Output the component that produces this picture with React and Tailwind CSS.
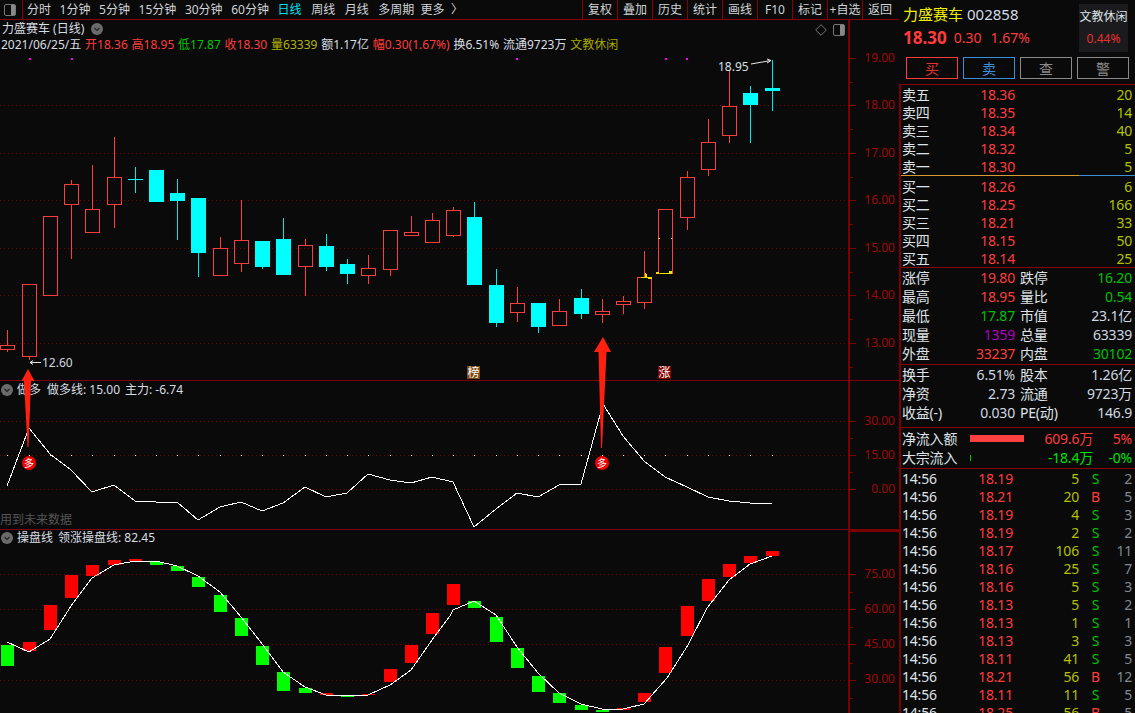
const RED = "#ff3c3c";
const GRID = "#7a0000";
const LINE = "#7d0000";

const TABS_A = ["分时", "1分钟", "5分钟", "15分钟", "30分钟", "60分钟"];
const TABS_B = ["周线", "月线", "多周期"];
const TOOLS = ["复权", "叠加", "历史", "统计", "画线", "F10", "标记", "+自选", "返回"];

// [center x, high, low, body top, body bottom, up?]
const CANDLES = [
  [7, 330, 352, 345, 349, 1],
  [29, 284, 360, 284, 356, 1],
  [50, 216, 295, 216, 295, 1],
  [71, 180, 259, 184, 204, 1],
  [92, 165, 233, 209, 232, 1],
  [114, 137, 228, 177, 204, 1],
  [135, 167, 193, 179, 180, 0],
  [156, 170, 202, 170, 202, 0],
  [177, 179, 240, 193, 201, 0],
  [198, 198, 277, 198, 253, 0],
  [220, 237, 275, 248, 275, 1],
  [241, 200, 272, 240, 263, 1],
  [262, 241, 269, 241, 267, 0],
  [283, 218, 275, 239, 275, 0],
  [305, 239, 296, 245, 266, 1],
  [326, 234, 271, 246, 267, 0],
  [347, 259, 284, 264, 274, 0],
  [368, 255, 284, 268, 275, 1],
  [390, 230, 276, 230, 269, 1],
  [411, 216, 235, 232, 235, 1],
  [432, 213, 243, 220, 242, 1],
  [453, 207, 237, 210, 235, 1],
  [474, 202, 285, 217, 285, 0],
  [496, 269, 327, 285, 323, 0],
  [517, 287, 322, 303, 312, 1],
  [538, 303, 333, 303, 327, 0],
  [559, 299, 326, 311, 325, 1],
  [581, 289, 319, 298, 314, 0],
  [602, 299, 323, 311, 314, 1],
  [623, 296, 314, 301, 304, 1],
  [644, 251, 309, 277, 302, 1],
  [665, 209, 273, 209, 273, 1],
  [687, 171, 230, 177, 217, 1],
  [708, 119, 176, 142, 169, 1],
  [729, 70, 143, 106, 135, 1],
  [750, 86, 143, 93, 105, 0],
  [772, 60, 111, 88, 91, 0],
];

const MAIN_GRID = [105, 153, 200, 248, 295, 343];
const MAIN_TICKS = [
  ["19.00", 58], ["18.00", 105], ["17.00", 153], ["16.00", 200],
  ["15.00", 248], ["14.00", 295], ["13.00", 343],
];
const MAIN_MINOR = [82, 129, 177, 224, 272, 319, 367];

const DUO_LINE = "7,486 29,428 50,454 71,470 92,492 114,485 135,501 156,502 177,502 198,520 220,507 241,502 262,511 283,503 305,487 326,497 347,493 368,474 390,480 411,483 432,477 453,482 474,527 496,509 517,493 538,497 559,485 581,484 603,404 623,436 644,461 665,477 687,487 708,497 729,501 750,503 772,504";

const PAN_LINE = "7,642 29,652 50,639 71,606 92,578 114,565 135,561 156,561 177,566 198,576 220,592 241,617 263,645 283,672 305,687 326,695 347,695 368,695 390,685 411,670 432,640 450,616 453,610 474,601 496,615 517,647 538,673 559,693 581,704 602,709 623,709 644,704 667,678 688,645 707,608 729,580 750,564 772,556";

// [center x, top, bottom, up?]
const PAN_BARS = [
  [7, 645, 666, 0], [29, 642, 651, 1], [50, 605, 630, 1], [71, 575, 598, 1],
  [92, 565, 576, 1], [114, 560, 565, 1], [135, 559, 561, 1], [156, 562, 565, 0],
  [177, 566, 571, 0], [198, 577, 587, 0], [220, 595, 612, 0], [241, 618, 636, 0],
  [262, 646, 665, 0], [283, 672, 691, 0], [305, 688, 693, 0], [326, 693, 695, 1],
  [347, 695, 697, 0], [368, 694, 695, 1], [390, 669, 682, 1], [411, 645, 663, 1],
  [432, 613, 634, 1], [453, 584, 605, 1], [474, 601, 608, 0], [496, 617, 642, 0],
  [517, 648, 668, 0], [538, 676, 692, 0], [559, 693, 703, 0], [581, 705, 710, 0],
  [602, 710, 712, 0], [623, 708, 710, 1], [644, 693, 702, 1], [665, 647, 673, 1],
  [687, 606, 636, 1], [708, 579, 601, 1], [729, 564, 577, 1], [750, 556, 563, 1],
  [772, 551, 556, 1],
];

const SELLS = [["卖五", "18.36", "20"], ["卖四", "18.35", "14"], ["卖三", "18.34", "40"], ["卖二", "18.32", "5"], ["卖一", "18.30", "5"]];
const BUYS = [["买一", "18.26", "6"], ["买二", "18.25", "166"], ["买三", "18.21", "33"], ["买四", "18.15", "50"], ["买五", "18.14", "25"]];

const TRADES = [
  ["18.19", "5", "S", "2"], ["18.21", "20", "B", "5"], ["18.19", "4", "S", "3"], ["18.19", "2", "S", "2"],
  ["18.17", "106", "S", "11"], ["18.16", "25", "S", "7"], ["18.16", "5", "S", "3"], ["18.13", "5", "S", "2"],
  ["18.13", "1", "S", "1"], ["18.13", "3", "S", "3"], ["18.11", "41", "S", "5"], ["18.21", "56", "B", "12"],
  ["18.11", "11", "S", "5"], ["18.25", "56", "B", "5"],
];

function DownDot() {
  return (
    <svg width="12" height="12" viewBox="0 0 12 12" className="shrink-0">
      <circle cx="6" cy="6" r="6" fill="#6a6a6a" />
      <path d="M3.5 5 L6 7.5 L8.5 5" fill="none" stroke="#222" strokeWidth="1.2" />
    </svg>
  );
}

function PanelIcon({ className }) {
  return (
    <svg width="12" height="12" viewBox="0 0 12 12" className={className}>
      <rect x="0.5" y="0.5" width="11" height="11" rx="1.5" fill="#0a0a0a" stroke="#777" />
      <rect x="7" y="1" width="4" height="10" fill="#888" />
    </svg>
  );
}

function Candle({ c }) {
  const [x, hi, lo, top, bot, up] = c;
  if (up) {
    return (
      <g stroke={RED} fill="none">
        {hi < top && <line x1={x + 0.5} x2={x + 0.5} y1={hi} y2={top} />}
        {lo > bot && <line x1={x + 0.5} x2={x + 0.5} y1={bot} y2={lo} />}
        <rect x={x - 6.5} y={top + 0.5} width="14" height={bot - top} />
      </g>
    );
  }
  return (
    <g>
      <line x1={x + 0.5} x2={x + 0.5} y1={hi} y2={lo} stroke="#00e8e8" />
      <rect x={x - 7} y={top} width="15" height={bot - top} fill="#00ffff" />
    </g>
  );
}

function GridLines({ ys }) {
  return ys.map((y) => (
    <line key={y} x1="0" x2="848" y1={y + 0.5} y2={y + 0.5} stroke={GRID} strokeDasharray="1 3" />
  ));
}

function Axis({ y0, h, ticks, minor }) {
  return (
    <svg width="50" height={h} viewBox={`849 ${y0} 50 ${h}`} className="block">
      {ticks.map(([label, y, ly]) => (
        <g key={label}>
          <line x1="849" x2="855" y1={y + 0.5} y2={y + 0.5} stroke={LINE} />
          <text x="894" y={(ly ?? y) + 4} textAnchor="end" fontSize="12" fill="#a00808">{label}</text>
        </g>
      ))}
      {minor.map((y) => (
        <line key={y} x1="849" x2="852" y1={y + 0.5} y2={y + 0.5} stroke={LINE} />
      ))}
    </svg>
  );
}

function MainPane() {
  return (
    <div className="flex h-[361px] shrink-0 border-b border-[#7d0000]">
      <div className="relative w-[848px] h-[360px]">
        <svg width="848" height="360" viewBox="0 20 848 360" className="block" shapeRendering="crispEdges">
          <GridLines ys={MAIN_GRID} />
          {CANDLES.map((c) => <Candle key={c[0]} c={c} />)}
          {[29, 71, 516, 665, 686].map((x) => <rect key={x} x={x} y="58" width="2" height="2" fill="#ff00ff" />)}
          <path d="M640 277h5l1-7 1 7h5v2h-4v-1h-7zM656 272h3v2h-3zM669 271h3v3h-3zM660 273h9v1h-9zM658 238h2v1h-2zM671 238h1v1h-1z" fill="#f5e400" />
          <rect x="467" y="366" width="13" height="13" fill="#7a4a10" />
          <rect x="658" y="366" width="13" height="13" fill="#800000" />
          <g shapeRendering="auto">
            <text x="473.5" y="377" textAnchor="middle" fontSize="12" fill="#fff">榜</text>
            <text x="664.5" y="377" textAnchor="middle" fontSize="12" fill="#fff">涨</text>
            <text x="42" y="367" fontSize="12" fill="#d0d8e0">12.60</text>
            <path d="M30 362.5h11M30 362.5l3-2M30 362.5l3 2" stroke="#e0e0e0" fill="none" />
            <text x="718" y="71" fontSize="12" fill="#d8e0e8">18.95</text>
            <path d="M751 64l20-3.500M771 60.500l-4-1.500M771 60.500l-4 2.500" stroke="#e8e8e8" fill="none" />
          </g>
        </svg>
        <div className="absolute left-[2px] top-[1px] flex h-[16px] items-center gap-[7px] text-[12px] text-[#d8dde2]">
          <span>力盛赛车 (日线)</span>
          <DownDot />
        </div>
        <div className="absolute left-[1px] top-[17px] flex h-[16px] items-center gap-[3.8px] whitespace-nowrap text-[12px] text-[#d8dde2]">
          <span>2021/06/25/五</span>
          <span className="text-[#ff3c3c]">开18.36</span>
          <span className="text-[#ff3c3c]">高18.95</span>
          <span className="text-[#00c800]">低17.87</span>
          <span className="text-[#ff3c3c]">收18.30</span>
          <span className="text-[#b4b400]">量63339</span>
          <span>额1.17亿</span>
          <span className="text-[#ff3c3c]">幅0.30(1.67%)</span>
          <span>换6.51%</span>
          <span>流通9723万</span>
          <span className="text-[#a8a800]">文教休闲</span>
        </div>
        <svg width="12" height="12" viewBox="0 0 12 12" className="absolute left-[815px] top-[4px]">
          <path d="M6 .7L11.300 6 6 11.300 .7 6z" fill="none" stroke="#777" />
        </svg>
        <PanelIcon className="absolute left-[833px] top-[4px]" />
      </div>
      <div className="w-[51px] border-l-2 border-[#7d0000]">
        <Axis y0={20} h={360} ticks={MAIN_TICKS} minor={MAIN_MINOR} />
      </div>
    </div>
  );
}

function DuoPane() {
  return (
    <div className="flex h-[149px] shrink-0 border-b border-[#7d0000]">
      <div className="relative w-[848px] h-[148px]">
        <svg width="848" height="148" viewBox="0 381 848 148" className="block" shapeRendering="crispEdges">
          <GridLines ys={[421, 455, 489]} />
          {CANDLES.map((c) => <rect key={c[0]} x={c[0]} y="455" width="1" height="1" fill="#fff" />)}
          <polyline points={DUO_LINE} fill="none" stroke="#ffffff" strokeWidth="1" />
          {[29, 602].map((x) => (
            <g key={x} shapeRendering="auto">
              <circle cx={x} cy="463" r="7" fill="#f00000" />
              <text x={x} y="467" textAnchor="middle" fontSize="10" fill="#fff">多</text>
            </g>
          ))}
        </svg>
        <div className="absolute left-[1px] top-[1px] flex h-[16px] items-center whitespace-nowrap text-[12px] text-[#d8dde2]">
          <DownDot />
          <span className="ml-[4px]">做多</span>
          <span className="ml-[6px]">做多线: 15.00</span>
          <span className="ml-[5px]">主力: -6.74</span>
        </div>
        <div className="absolute left-0 top-[131px] text-[12px] leading-[16px] text-[#555]">用到未来数据</div>
      </div>
      <div className="w-[51px] border-l-2 border-[#7d0000]">
        <Axis y0={381} h={148} ticks={[["30.00", 421], ["15.00", 455], ["0.00", 489]]} minor={[438, 472]} />
      </div>
    </div>
  );
}

function PanPane() {
  return (
    <div className="flex min-h-0 flex-1">
      <div className="relative h-[183px] w-[848px]">
        <svg width="848" height="183" viewBox="0 530 848 183" className="block" shapeRendering="crispEdges">
          <GridLines ys={[574, 609, 644, 680]} />
          {PAN_BARS.map(([x, top, bot, up]) => (
            <rect key={x} x={x - 6} y={top} width="13" height={bot - top} fill={up ? "#ff0000" : "#00ff00"} />
          ))}
          <polyline points={PAN_LINE} fill="none" stroke="#ffffff" strokeWidth="1" />
        </svg>
        <div className="absolute left-[1px] top-0 flex h-[16px] items-center whitespace-nowrap text-[12px] text-[#d8dde2]">
          <DownDot />
          <span className="ml-[4px]">操盘线</span>
          <span className="ml-[5px]">领涨操盘线: 82.45</span>
        </div>
      </div>
      <div className="w-[51px] border-l-2 border-t-2 border-[#7d0000]">
        <Axis
          y0={532}
          h={181}
          ticks={[["75.00", 574], ["60.00", 609], ["45.00", 644], ["30.00", 680, 679]]}
          minor={[592, 627, 663, 698]}
        />
      </div>
    </div>
  );
}

function Toolbar() {
  return (
    <div className="flex h-[20px] shrink-0 items-stretch whitespace-nowrap border-b border-[#8a0000] text-[12px] text-[#d0d4d8]">
      <div className="flex w-[23px] items-center border-r border-[#8a0000] pl-[4px]">
        <PanelIcon />
      </div>
      <div className="ml-[4px] flex items-center gap-[8.6px]">
        {TABS_A.map((t) => <span key={t}>{t}</span>)}
        <span className="text-[#00e0f0]">日线</span>
        <span className="-ml-[8.6px] flex gap-[9.6px] pl-[9.6px]">
          {TABS_B.map((t) => <span key={t}>{t}</span>)}
        </span>
        <span className="-ml-[2.6px]">更多</span>
        <span className="-ml-[2px]">〉</span>
      </div>
      <div className="ml-auto mr-[2px] flex">
        {TOOLS.map((t) => (
          <div key={t} className="flex w-[35px] items-center justify-center border-l border-[#8a0000]">{t}</div>
        ))}
      </div>
    </div>
  );
}

function Arrows() {
  return (
    <svg width="848" height="693" viewBox="0 20 848 693" className="pointer-events-none absolute left-0 top-[20px]">
      <polygon points="28,369 34.5,381 31,381 28.500,447 27.500,447 24,381 21.500,381" fill="#ff2010" />
      <polygon points="603,337 611,352 606.500,352 602,448 601,448 598.500,352 594,352" fill="#ff2010" />
    </svg>
  );
}

function BookRow({ label, price, qty }) {
  return (
    <div className="flex h-[18px] items-center">
      <span className="w-[60px] text-[#dfe3e8]">{label}</span>
      <span className="w-[53px] text-right text-[#ff3c3c]">{price}</span>
      <span className="flex-1 pr-[3px] text-right text-[#b4c000]">{qty}</span>
    </div>
  );
}

function InfoRow({ a, av, ac = "text-[#d0d8e0]", b, bv, bc = "text-[#d0d8e0]" }) {
  return (
    <div className="flex h-[19px] items-center">
      <span className="w-[50px] shrink-0 text-[#dfe3e8]">{a}</span>
      <span className={`w-[63px] text-right ${ac}`}>{av}</span>
      <span className="ml-[5px] w-[50px] shrink-0 whitespace-nowrap text-[#dfe3e8]">{b}</span>
      <span className={`flex-1 pr-[3px] text-right ${bc}`}>{bv}</span>
    </div>
  );
}

function SideButton({ label, className }) {
  return (
    <div className={`flex h-[22px] w-[52px] items-center justify-center border ${className}`}>{label}</div>
  );
}

function SidePanel() {
  return (
    <div className="flex h-[713px] w-[236px] flex-col text-[14px] tracking-[-0.2px]">
      <div className="relative h-[85px] shrink-0 border-b border-[#8a0000]">
        <div className="absolute left-[4px] top-[4px] flex items-center leading-[20px] tracking-normal">
          <span className="text-[15px] text-[#f0f000]">力盛赛车</span>
          <span className="ml-[4px] text-[15px] text-[#d0dce8]">002858</span>
        </div>
        <div className="absolute left-[4px] top-[28px] flex items-center leading-[20px] tracking-normal text-[#ff3c3c]">
          <span className="text-[17px] font-bold">18.30</span>
          <span className="ml-[7px]">0.30</span>
          <span className="ml-[9px]">1.67%</span>
        </div>
        <div className="absolute left-[180px] top-[4px] flex h-[48px] w-[49px] flex-col items-center justify-center gap-[8px] bg-[#1b1b1d] text-[12px] leading-[14px] tracking-normal">
          <span className="text-[#dfe3e8]">文教休闲</span>
          <span className="text-[#e83030]">0.44%</span>
        </div>
        <div className="absolute left-[7px] top-[57px] flex gap-[5px]">
          <SideButton label="买" className="border-[#ff3c3c] text-[#e83030]" />
          <SideButton label="卖" className="border-[#3a8fd8] text-[#3a8fd8]" />
          <SideButton label="查" className="border-[#8a8a8a] text-[#8a8a8a]" />
          <SideButton label="警" className="border-[#8a8a8a] text-[#8a8a8a]" />
        </div>
      </div>

      <div className="flex min-h-0 flex-1 flex-col overflow-hidden border-l-2 border-[#7d0000] pl-px">
        <div className="shrink-0">
          {SELLS.map(([l, p, q]) => <BookRow key={l} label={l} price={p} qty={q} />)}
        </div>
        <div className="-ml-px flex h-px shrink-0">
          <div className="w-[178px] bg-[#d89a30]" />
          <div className="flex-1 bg-[#3a8fd8]" />
        </div>
        <div className="h-[92px] shrink-0 border-b border-[#8a0000] -ml-px pl-px pt-[1px]">
          {BUYS.map(([l, p, q]) => <BookRow key={l} label={l} price={p} qty={q} />)}
        </div>
        <div className="-ml-px shrink-0 border-b border-[#8a0000] pl-px pb-px">
          <InfoRow a="涨停" av="19.80" ac="text-[#ff3c3c]" b="跌停" bv="16.20" bc="text-[#00c000]" />
          <InfoRow a="最高" av="18.95" ac="text-[#ff3c3c]" b="量比" bv="0.54" bc="text-[#00c000]" />
          <InfoRow a="最低" av="17.87" ac="text-[#00c000]" b="市值" bv="23.1亿" />
          <InfoRow a="现量" av="1359" ac="text-[#b000c0]" b="总量" bv="63339" />
          <InfoRow a="外盘" av="33237" ac="text-[#ff3c3c]" b="内盘" bv="30102" bc="text-[#00c000]" />
        </div>
        <div className="-ml-px h-[63px] shrink-0 border-b border-[#8a0000] pl-px">
          <InfoRow a="换手" av="6.51%" b="股本" bv="1.26亿" />
          <InfoRow a="净资" av="2.73" b="流通" bv="9723万" />
          <InfoRow a="收益(-)" av="0.030" b="PE(动)" bv="146.9" />
        </div>
        <div className="-ml-px h-[41px] shrink-0 border-b border-[#8a0000] pl-px pt-px">
          <div className="flex h-[19px] items-center">
            <span className="w-[68px] shrink-0 text-[#dfe3e8]">净流入额</span>
            <span className="block h-[7px] w-[54px] bg-[#ff4040]" />
            <span className="w-[69px] text-right text-[#ff3c3c]">609.6万</span>
            <span className="flex-1 pr-[3px] text-right text-[#ff3c3c]">5%</span>
          </div>
          <div className="flex h-[19px] items-center">
            <span className="w-[68px] shrink-0 text-[#dfe3e8]">大宗流入</span>
            <span className="block h-[6px] w-[54px]"><span className="block h-[6px] w-px bg-[#00c000]" /></span>
            <span className="w-[69px] text-right text-[#00e000]">-18.4万</span>
            <span className="flex-1 pr-[3px] text-right text-[#00e000]">-0%</span>
          </div>
        </div>
        <div>
          {TRADES.map(([p, q, s, n], i) => (
            <div key={i} className="flex h-[18px] items-center">
              <span className="w-[50px] text-[#dfe3e8]">14:56</span>
              <span className="w-[61px] text-right text-[#ff3c3c]">{p}</span>
              <span className="w-[66px] text-right text-[#b4c000]">{q}</span>
              <span className={`w-[33px] text-center ${s === "B" ? "text-[#ff3c3c]" : "text-[#00c000]"}`}>{s}</span>
              <span className="flex-1 pr-[3px] text-right text-[#808890]">{n}</span>
            </div>
          ))}
        </div>
      </div>
    </div>
  );
}

export default function App() {
  return (
    <div className="flex h-[713px] w-[1135px] overflow-hidden bg-[#0a0a0a] font-['Noto_Sans','Noto_Sans_CJK_SC',sans-serif]">
      <div className="relative flex h-[713px] w-[899px] shrink-0 flex-col">
        <Toolbar />
        <MainPane />
        <DuoPane />
        <PanPane />
        <Arrows />
      </div>
      <SidePanel />
    </div>
  );
}
